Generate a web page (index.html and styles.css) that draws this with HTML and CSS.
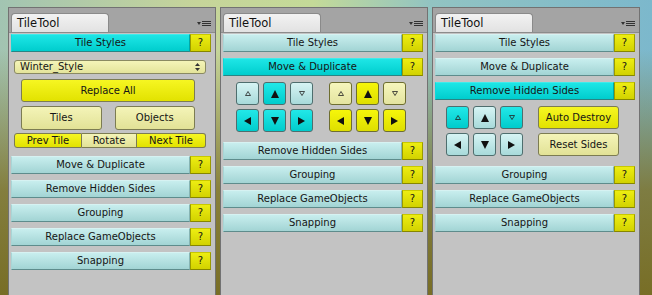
FILE: index.html
```html
<!DOCTYPE html>
<html lang="en">
<head>
    <meta charset="UTF-8">
    <title>TileTool</title>
    <link rel="stylesheet" href="styles.css">
</head>
<body>
    <div class="desk">
        <!-- Panel 1: tile styles open -->
        <div class="panel">
            <div class="head">
                <div class="tab">TileTool</div>
                <svg class="menu" width="14" height="7" viewBox="0 0 14 7"><polygon points="0,2 4,2 2,5" fill="#333"/><rect x="5" y="1" width="9" height="1" fill="#333"/><rect x="5" y="3" width="9" height="1" fill="#333"/><rect x="5" y="5" width="9" height="1" fill="#333"/></svg>
            </div>
            <div class="inner">
                <div class="row open"><div class="bar active">Tile Styles</div><div class="help">?</div></div>
                <div class="select">
                    <span>Winter_Style</span>
                    <svg width="5" height="8" viewBox="0 0 5 8"><polygon points="2.5,0 5,3 0,3" fill="#333"/><polygon points="0,5 5,5 2.5,8" fill="#333"/></svg>
                </div>
                <div class="btn hot wide">Replace All</div>
                <div class="pair">
                    <div class="btn pale">Tiles</div>
                    <div class="btn pale">Objects</div>
                </div>
                <div class="seg">
                    <span class="hot prev">Prev Tile</span>
                    <span class="pale rot">Rotate</span>
                    <span class="hot next">Next Tile</span>
                </div>
                <div class="row"><div class="bar">Move &amp; Duplicate</div><div class="help">?</div></div>
                <div class="row"><div class="bar">Remove Hidden Sides</div><div class="help">?</div></div>
                <div class="row"><div class="bar">Grouping</div><div class="help">?</div></div>
                <div class="row"><div class="bar">Replace GameObjects</div><div class="help">?</div></div>
                <div class="row"><div class="bar">Snapping</div><div class="help">?</div></div>
            </div>
        </div>

        <!-- Panel 2: move & duplicate open -->
        <div class="panel">
            <div class="head">
                <div class="tab">TileTool</div>
                <svg class="menu" width="14" height="7" viewBox="0 0 14 7"><polygon points="0,2 4,2 2,5" fill="#333"/><rect x="5" y="1" width="9" height="1" fill="#333"/><rect x="5" y="3" width="9" height="1" fill="#333"/><rect x="5" y="5" width="9" height="1" fill="#333"/></svg>
            </div>
            <div class="inner">
                <div class="row"><div class="bar">Tile Styles</div><div class="help">?</div></div>
                <div class="row"><div class="bar active">Move &amp; Duplicate</div><div class="help">?</div></div>
                <div class="arrows move">
                    <div class="pad">
                        <div class="key cyan-lt"><svg width="6" height="5" viewBox="0 0 6 5"><polygon points="3,0.5 5.5,4.5 0.5,4.5" fill="none" stroke="#222" stroke-width="0.8"/></svg></div>
                        <div class="key cyan"><svg width="8" height="8" viewBox="0 0 8 8"><polygon points="4,0 8,8 0,8" fill="#111"/></svg></div>
                        <div class="key cyan-lt"><svg width="6" height="5" viewBox="0 0 6 5"><polygon points="0.5,0.5 5.5,0.5 3,4.5" fill="none" stroke="#222" stroke-width="0.8"/></svg></div>
                        <div class="key cyan"><svg width="7" height="8" viewBox="0 0 7 8"><polygon points="0,4 7,0 7,8" fill="#111"/></svg></div>
                        <div class="key cyan"><svg width="8" height="8" viewBox="0 0 8 8"><polygon points="0,0 8,0 4,8" fill="#111"/></svg></div>
                        <div class="key cyan"><svg width="7" height="8" viewBox="0 0 7 8"><polygon points="0,0 7,4 0,8" fill="#111"/></svg></div>
                    </div>
                    <div class="pad">
                        <div class="key yel-lt"><svg width="6" height="5" viewBox="0 0 6 5"><polygon points="3,0.5 5.5,4.5 0.5,4.5" fill="none" stroke="#222" stroke-width="0.8"/></svg></div>
                        <div class="key yel"><svg width="8" height="8" viewBox="0 0 8 8"><polygon points="4,0 8,8 0,8" fill="#111"/></svg></div>
                        <div class="key yel-lt"><svg width="6" height="5" viewBox="0 0 6 5"><polygon points="0.5,0.5 5.5,0.5 3,4.5" fill="none" stroke="#222" stroke-width="0.8"/></svg></div>
                        <div class="key yel"><svg width="7" height="8" viewBox="0 0 7 8"><polygon points="0,4 7,0 7,8" fill="#111"/></svg></div>
                        <div class="key yel"><svg width="8" height="8" viewBox="0 0 8 8"><polygon points="0,0 8,0 4,8" fill="#111"/></svg></div>
                        <div class="key yel"><svg width="7" height="8" viewBox="0 0 7 8"><polygon points="0,0 7,4 0,8" fill="#111"/></svg></div>
                    </div>
                </div>
                <div class="row"><div class="bar">Remove Hidden Sides</div><div class="help">?</div></div>
                <div class="row"><div class="bar">Grouping</div><div class="help">?</div></div>
                <div class="row"><div class="bar">Replace GameObjects</div><div class="help">?</div></div>
                <div class="row"><div class="bar">Snapping</div><div class="help">?</div></div>
            </div>
        </div>

        <!-- Panel 3: remove hidden sides open -->
        <div class="panel">
            <div class="head">
                <div class="tab">TileTool</div>
                <svg class="menu" width="14" height="7" viewBox="0 0 14 7"><polygon points="0,2 4,2 2,5" fill="#333"/><rect x="5" y="1" width="9" height="1" fill="#333"/><rect x="5" y="3" width="9" height="1" fill="#333"/><rect x="5" y="5" width="9" height="1" fill="#333"/></svg>
            </div>
            <div class="inner">
                <div class="row"><div class="bar">Tile Styles</div><div class="help">?</div></div>
                <div class="row"><div class="bar">Move &amp; Duplicate</div><div class="help">?</div></div>
                <div class="row"><div class="bar active">Remove Hidden Sides</div><div class="help">?</div></div>
                <div class="arrows sides">
                    <div class="pad">
                        <div class="key cyan"><svg width="6" height="5" viewBox="0 0 6 5"><polygon points="3,0.5 5.5,4.5 0.5,4.5" fill="none" stroke="#222" stroke-width="0.8"/></svg></div>
                        <div class="key cyan-lt"><svg width="8" height="8" viewBox="0 0 8 8"><polygon points="4,0 8,8 0,8" fill="#111"/></svg></div>
                        <div class="key cyan"><svg width="6" height="5" viewBox="0 0 6 5"><polygon points="0.5,0.5 5.5,0.5 3,4.5" fill="none" stroke="#222" stroke-width="0.8"/></svg></div>
                        <div class="key cyan-lt"><svg width="7" height="8" viewBox="0 0 7 8"><polygon points="0,4 7,0 7,8" fill="#111"/></svg></div>
                        <div class="key cyan-lt"><svg width="8" height="8" viewBox="0 0 8 8"><polygon points="0,0 8,0 4,8" fill="#111"/></svg></div>
                        <div class="key cyan-lt"><svg width="7" height="8" viewBox="0 0 7 8"><polygon points="0,0 7,4 0,8" fill="#111"/></svg></div>
                    </div>
                    <div class="actions">
                        <div class="btn hot">Auto Destroy</div>
                        <div class="btn pale">Reset Sides</div>
                    </div>
                </div>
                <div class="row"><div class="bar">Grouping</div><div class="help">?</div></div>
                <div class="row"><div class="bar">Replace GameObjects</div><div class="help">?</div></div>
                <div class="row"><div class="bar">Snapping</div><div class="help">?</div></div>
            </div>
        </div>
    </div>
</body>
</html>
```

FILE: styles.css
```css
body {
    margin: 0;
    height: 295px;
    overflow: hidden;
    font-family: "DejaVu Sans", sans-serif;
    font-size: 10px;
    color: #151515;
    background:
        linear-gradient(to bottom, rgba(124, 112, 40, 0) 0, rgba(124, 112, 40, 0) 50px, rgba(126, 114, 42, 0.85) 190px, rgba(120, 110, 38, 1) 295px),
        linear-gradient(to right, #a2c4b2 0, #c6d49a 30%, #c4da98 48%, #92c4c2 66%, #7cb8cc 100%);
}
.desk {
    display: flex;
    gap: 4px;
    padding: 7px 0 0 8px;
}
.panel {
    width: 206px;
    height: 300px;
    display: flex;
    flex-direction: column;
    background: #a4a4a4;
    border: 1px solid #727272;
    border-bottom: none;
}
.head {
    height: 19px;
    padding: 5px 4px 0 2px;
    display: flex;
    justify-content: space-between;
    align-items: flex-end;
}
.tab {
    width: 91px;
    height: 18px;
    padding-left: 5px;
    line-height: 18px;
    font-size: 11.5px;
    color: #111;
    background: linear-gradient(#f2f2f2, #e2e2e2);
    border: 1px solid #8a8a8a;
    border-bottom: none;
    border-radius: 4px 4px 0 0;
}
.menu {
    margin-bottom: 5px;
}
.inner {
    flex: 1;
    background: #c3c3c3;
    border-top: 1px solid #8c8c8c;
    padding: 1px 4px 0 2px;
}
.row {
    display: flex;
    height: 18px;
    margin-bottom: 6px;
}
.row.open {
    margin-bottom: 8px;
}
.bar {
    flex: 1;
    text-align: center;
    line-height: 16px;
    background: linear-gradient(#c8eeee, #a2d4d4);
    border: 1px solid;
    border-color: #d6f2f2 #86b4b4 #5e8c8c #a8d6d6;
}
.bar.active {
    background: linear-gradient(#1ee6e6, #00cdcd);
    border-color: #40eaea #00a8a8 #2a8484 #10d8d8;
}
.help {
    width: 19px;
    text-align: center;
    line-height: 16px;
    background: linear-gradient(#eded12, #d2d200);
    border: 1px solid;
    border-color: #c8c800 #9a9a00 #868600 #9a9a00;
}
.btn {
    box-sizing: border-box;
    text-align: center;
    border: 1px solid #7c7c52;
    border-radius: 3px;
}
.hot {
    background: linear-gradient(#f6f622, #e2e200);
}
.pale {
    background: linear-gradient(#f4f4b8, #e2e296);
}
.select {
    height: 12px;
    margin: 0 5px 5px 3px;
    padding: 0 5px;
    line-height: 12px;
    display: flex;
    justify-content: space-between;
    align-items: center;
    background: linear-gradient(#f4f4b8, #e4e49a);
    border: 1px solid #8a8a62;
    border-radius: 3px;
}
.wide {
    height: 23px;
    line-height: 21px;
    margin: 0 16px 4px 10px;
}
.pair {
    display: flex;
    gap: 13px;
    margin: 0 16px 3px 10px;
}
.pair .btn {
    flex: 1;
    height: 24px;
    line-height: 22px;
}
.seg {
    display: flex;
    height: 15px;
    margin: 0 5px 8px 3px;
    line-height: 13px;
    text-align: center;
}
.seg span {
    border: 1px solid #7c7c52;
}
.seg .prev {
    width: 66px;
    border-radius: 3px 0 0 3px;
}
.seg .rot {
    width: 54px;
    border-left: none;
}
.seg .next {
    flex: 1;
    border-left: none;
    border-radius: 0 3px 3px 0;
}
.arrows {
    display: flex;
    margin: 3px 0 10px;
}
.arrows.move {
    padding-left: 13px;
    gap: 16px;
}
.arrows.sides {
    padding-left: 11px;
    gap: 15px;
}
.pad {
    display: grid;
    grid-template-columns: repeat(3, 23px);
    grid-auto-rows: 23px;
    gap: 4px;
}
.key {
    box-sizing: border-box;
    display: flex;
    align-items: center;
    justify-content: center;
    border: 1px solid #4e6e6e;
    border-radius: 3px;
}
.key.cyan {
    background: linear-gradient(#22e8e8, #00cccc);
}
.key.cyan-lt {
    background: linear-gradient(#d6f4f4, #a8dada);
}
.key.yel {
    background: linear-gradient(#f6f60a, #dede00);
    border-color: #6e6e30;
}
.key.yel-lt {
    background: linear-gradient(#f6f6bc, #e4e4a0);
    border-color: #6e6e30;
}
.actions {
    display: flex;
    flex-direction: column;
    gap: 4px;
}
.actions .btn {
    width: 81px;
    height: 23px;
    line-height: 21px;
}
```
